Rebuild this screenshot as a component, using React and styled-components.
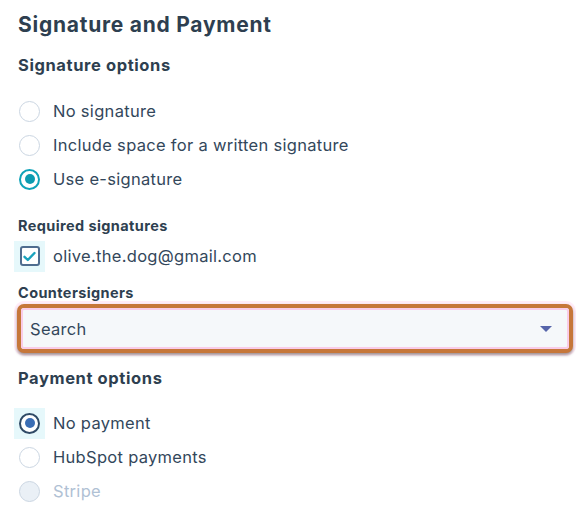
import React from "react";
import styled, { createGlobalStyle, css } from "styled-components";

const GlobalStyle = createGlobalStyle`
  html, body {
    margin: 0;
    background: #ffffff;
  }
  body {
    font-family: "Inter", "Lato", "Liberation Sans", sans-serif;
    color: #33475b;
  }
`;

const Page = styled.div`
  padding: 10px 0 0 18px;
  display: flex;
  flex-direction: column;
`;

const Title = styled.h2`
  margin: 0;
  font-size: 21px;
  line-height: 30px;
  font-weight: 700;
  letter-spacing: 0.75px;
  color: #2e3f50;
`;

const SectionHeading = styled.h3`
  margin: ${(p) => p.$top}px 0 0 0;
  font-size: 16.5px;
  line-height: 24px;
  font-weight: 700;
  letter-spacing: 0.6px;
  color: #2e3f50;
`;

const FieldLabel = styled.div`
  margin-top: ${(p) => p.$top}px;
  font-size: 14.5px;
  line-height: 20px;
  font-weight: 700;
  letter-spacing: 0.4px;
  color: #2e3f50;
`;

const OptionList = styled.div`
  margin-top: ${(p) => p.$top}px;
  display: flex;
  flex-direction: column;
`;

const Option = styled.label`
  display: flex;
  align-items: center;
  gap: 13px;
  height: 34px;
  padding-left: 1px;
  font-size: 16.5px;
  letter-spacing: 0.3px;
  color: ${(p) => (p.$disabled ? "#b0c1d4" : "#33475b")};
`;

const Focus = styled.span`
  display: flex;
  align-items: center;
  justify-content: center;
  width: 21px;
  height: 21px;
  ${(p) =>
    p.$highlight &&
    css`
      box-shadow: 0 0 0 5px #e6f8fb;
      background: #e6f8fb;
    `}
`;

const Radio = styled.span`
  box-sizing: border-box;
  width: 21px;
  height: 21px;
  border-radius: 50%;
  border: ${(p) =>
    p.$checked ? `2px solid ${p.$ring}` : "1.5px solid #cbd6e2"};
  background: ${(p) => (p.$disabled ? "#eaf0f6" : "#ffffff")};
  display: flex;
  align-items: center;
  justify-content: center;

  &::after {
    content: "";
    display: ${(p) => (p.$checked ? "block" : "none")};
    width: 10px;
    height: 10px;
    border-radius: 50%;
    background: ${(p) => p.$dot};
  }
`;

const CheckRow = styled.label`
  margin-top: 5px;
  display: flex;
  align-items: center;
  gap: 13px;
  height: 30px;
  padding-left: 1px;
  font-size: 16.5px;
  letter-spacing: 0.3px;
  color: #33475b;
`;

const Checkbox = styled.span`
  box-sizing: border-box;
  width: 20px;
  height: 20px;
  border: 2px solid #4f6d8f;
  border-radius: 3px;
  background: #ffffff;
  display: flex;
  align-items: center;
  justify-content: center;
`;

const Select = styled.div`
  margin-top: 1px;
  margin-right: 7px;
  margin-left: -1px;
  height: 49px;
  box-sizing: border-box;
  border: 4px solid #c6773a;
  border-radius: 7px;
  box-shadow: 0 2px 3px rgba(40, 30, 20, 0.45), 0 0 0 3px rgba(255, 200, 235, 0.35);
  background: #f5f8fa;
  display: flex;
  align-items: center;
  justify-content: space-between;
  padding: 0 17px 0 9px;
  outline: 2px solid #f9cce8;
  outline-offset: -6px;
`;

const SelectText = styled.span`
  font-size: 16.5px;
  letter-spacing: 0.3px;
  color: #33475b;
`;

const Caret = styled.span`
  width: 0;
  height: 0;
  border-left: 6px solid transparent;
  border-right: 6px solid transparent;
  border-top: 6px solid #5665aa;
`;

const RadioOption = ({ label, checked, disabled, ring, dot, highlight }) => (
  <Option $disabled={disabled}>
    <Focus $highlight={highlight}>
      <Radio $checked={checked} $disabled={disabled} $ring={ring} $dot={dot} />
    </Focus>
    {label}
  </Option>
);

const App = () => (
  <>
    <GlobalStyle />
    <Page>
      <Title>Signature and Payment</Title>

      <SectionHeading $top={13}>Signature options</SectionHeading>
      <OptionList $top={17}>
        <RadioOption label="No signature" />
        <RadioOption label="Include space for a written signature" />
        <RadioOption label="Use e-signature" checked ring="#0fa3b8" dot="#0b9bb0" />
      </OptionList>

      <FieldLabel $top={20}>Required signatures</FieldLabel>
      <CheckRow>
        <Focus $highlight>
          <Checkbox>
            <svg width="13" height="11" viewBox="0 0 13 11">
              <path
                d="M1.5 5.8 L4.8 9 L11.5 2"
                fill="none"
                stroke="#1aa3bd"
                strokeWidth="2.4"
                strokeLinecap="round"
                strokeLinejoin="round"
              />
            </svg>
          </Checkbox>
        </Focus>
        olive.the.dog@gmail.com
      </CheckRow>

      <FieldLabel $top={12}>Countersigners</FieldLabel>
      <Select>
        <SelectText>Search</SelectText>
        <Caret />
      </Select>

      <SectionHeading $top={13}>Payment options</SectionHeading>
      <OptionList $top={16}>
        <RadioOption label="No payment" checked ring="#2f4a66" dot="#3a6db4" highlight />
        <RadioOption label="HubSpot payments" />
        <RadioOption label="Stripe" disabled />
      </OptionList>
    </Page>
  </>
);

export default App;
